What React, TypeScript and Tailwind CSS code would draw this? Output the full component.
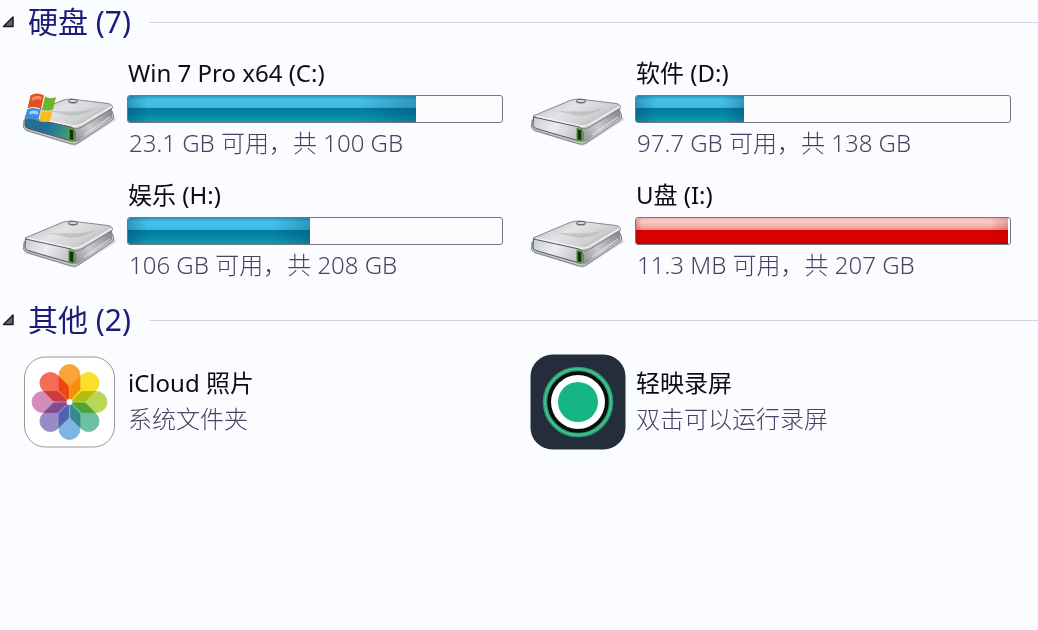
import { useState, type ReactNode } from 'react'

interface Drive {
    name: string
    free: string
    used: number
    system?: boolean
}

const drives: Drive[] = [
    { name: 'Win 7 Pro x64 (C:)', free: '23.1 GB 可用，共 100 GB', used: 77, system: true },
    { name: '软件 (D:)', free: '97.7 GB 可用，共 138 GB', used: 29 },
    { name: '娱乐 (H:)', free: '106 GB 可用，共 208 GB', used: 48.7 },
    { name: 'U盘 (I:)', free: '11.3 MB 可用，共 207 GB', used: 99.5 },
]

const petals = [
    { angle: 0, color: '#fba338' },
    { angle: 45, color: '#f8e02c' },
    { angle: 90, color: '#b9d757' },
    { angle: 135, color: '#6cc2a0' },
    { angle: 180, color: '#80b4e4' },
    { angle: 225, color: '#9a8ac6' },
    { angle: 270, color: '#d58bb8' },
    { angle: 315, color: '#f46c55' },
]

function DriveIcon({ id, system }: { id: string; system?: boolean }) {
    return (
        <svg viewBox="0 0 96 60" className="mt-8 w-24 shrink-0" aria-hidden="true">
            <defs>
                <linearGradient id={`${id}-top`} x1="0" y1="0" x2="1" y2="0.6">
                    <stop offset="0" stopColor="#b9babd" />
                    <stop offset="0.45" stopColor="#e3e3e5" />
                    <stop offset="0.75" stopColor="#cfd0d2" />
                    <stop offset="1" stopColor="#a9abad" />
                </linearGradient>
                <linearGradient id={`${id}-side`} x1="0" y1="1" x2="1" y2="0">
                    <stop offset="0" stopColor="#8b8d90" />
                    <stop offset="0.4" stopColor="#c9cacd" />
                    <stop offset="1" stopColor="#7d7f83" />
                </linearGradient>
                <linearGradient id={`${id}-front`} x1="0" y1="0" x2="1" y2="0.3">
                    <stop offset="0" stopColor={system ? '#2d6c8c' : '#c8cad2'} />
                    <stop offset="0.5" stopColor={system ? '#1f6f9c' : '#ececf4'} />
                    <stop offset="1" stopColor={system ? '#3f9a7c' : '#c3c5cd'} />
                </linearGradient>
            </defs>
            <path d="M3 42 L53 57 L94 31 L92 27 Z" fill="#8d8f93" opacity="0.35" />
            {/* base */}
            <path d="M2 31 L1.500 38 Q2 40.500 5 41.500 L46 54 Q53 56.500 57 53.500 L90 31 Q92 29.500 91.500 26 L90 22 Z" fill="#c5c7ca" stroke="#77797c" strokeWidth="0.9" />
            {/* right side */}
            <path d="M53 53 Q57 53 59 51 L90 29 V17 L60 35 Q53 39 53 44 Z" fill={`url(#${id}-side)`} />
            {/* lid */}
            <path d="M3 27 L40 11.500 Q44 10 49 10 L86 14.500 Q91 15.500 90.500 19 L61 37.500 Q56 41 50 39.500 L7 29.500 Q3 29 3 27 Z" fill={`url(#${id}-top)`} stroke="#6e7073" strokeWidth="0.8" />
            <path d="M6 27.500 L50 37 Q56 38 61 34.500 L90 17.500" fill="none" stroke="#f4f4f5" strokeWidth="2" opacity="0.85" />
            <path d="M27 22 L44 26 Q53 28 64 24 L74 19 Q60 23 50 22.500 Z" fill="#a5a6a9" opacity="0.45" />
            <path d="M62 46 L88 28" stroke="#e8e8ea" strokeWidth="1.200" opacity="0.7" />
            {/* front */}
            <path d="M3.500 28 L49 38 Q53 39 53 43 V50 Q53 53 49 52 L6 39.500 Q3 38.500 3 36 Z" fill={`url(#${id}-front)`} stroke="#55585c" strokeWidth="1" />
            <path d="M47 39.500 L52 40.500 V52 L47 51 Z" fill="#163015" stroke="#5fa436" strokeWidth="1.300" />
            <ellipse cx="51" cy="12.500" rx="5" ry="2.200" fill="#9a9b9e" />
            <ellipse cx="51" cy="12" rx="4.500" ry="1.700" fill="#d5d6d8" stroke="#55565a" strokeWidth="0.9" />
            {system && (
                <g>
                    <path d="M8.500 6.500 Q15 2.500 22 6.500 L19 20 Q12 16.500 5.500 19.500 Z" fill="#e2501f" />
                    <path d="M23 7.500 Q28.500 10.500 34 8 L31 20.500 Q25 23 20 20.500 Z" fill="#6fb52c" />
                    <path d="M5.200 20.500 Q12 17.500 18.500 21 L16 32 Q9 29 2.500 30.500 Z" fill="#3a8fd6" />
                    <path d="M19.500 21.500 Q25 24 30.800 21.500 L28 32 Q22 34 17 32 Z" fill="#f8bd22" />
                    <path d="M10 8.500 Q15 5.500 20 8 L19 11 Q14 9 9.500 12 Z" fill="#f58c61" />
                    <path d="M8 22.500 Q12 20.500 16.500 23 L15.500 26 Q11 24 7 25.500 Z" fill="#a3d4f5" />
                </g>
            )}
        </svg>
    )
}

function PhotosIcon() {
    return (
        <svg viewBox="0 0 96 96" className="w-24 shrink-0" aria-hidden="true">
            <rect x="2.500" y="3" width="90" height="90" rx="21" fill="#fff" stroke="#98989c" strokeWidth="1" />
            <g transform="translate(47.500 48)">
                {petals.map(petal => (
                    <path
                        key={petal.angle}
                        d="M0 -1 L-10.500 -12 V-27 A10.500 10.500 0 0 1 10.500 -27 V-12 Z"
                        transform={`rotate(${petal.angle})`}
                        fill={petal.color}
                        stroke={petal.color}
                        strokeWidth="0.8"
                        className="mix-blend-multiply"
                    />
                ))}
                <circle r="3" fill="#fff" />
            </g>
        </svg>
    )
}

function RecorderIcon() {
    return (
        <svg viewBox="0 0 96 96" className="w-24 shrink-0" aria-hidden="true">
            <rect x="0.500" y="0.500" width="95" height="95" rx="22" fill="#242e3a" />
            <circle cx="48" cy="48" r="33" fill="#07100d" stroke="#2b9f72" strokeWidth="4.500" />
            <circle cx="48" cy="48" r="33" fill="none" stroke="#4cc596" strokeWidth="1.500" />
            <circle cx="48" cy="48" r="27" fill="#fff" />
            <circle cx="48" cy="48" r="20" fill="#14b686" />
        </svg>
    )
}

function CapacityBar({ name, used }: { name: string; used: number }) {
    const full = used > 90
    return (
        <div
            role="meter"
            aria-label={name}
            aria-valuemin={0}
            aria-valuemax={100}
            aria-valuenow={used}
            className="mt-1.5 h-7 overflow-hidden rounded-[3px] border border-[#74767c] bg-[#fcfcff]"
        >
            <div
                className={
                    full
                        ? 'h-full bg-[linear-gradient(to_bottom,#f3b8ba_0%,#fbc9c9_15%,#f7a9a3_35%,#f08a80_46%,#d90000_48%,#dc0204_90%,#b80000_100%)]'
                        : 'h-full bg-[linear-gradient(to_bottom,#2f9cc4_0%,#45c2ea_15%,#3fbbe2_44%,#047a9e_47%,#0489a8_75%,#129cb4_100%)]'
                }
                style={{ width: `${used}%` }}
            >
                <div
                    className={
                        full
                            ? 'h-full bg-[linear-gradient(to_right,#80000040,#80000000_6px,#80000000_95%,#80000030)]'
                            : 'h-full bg-[linear-gradient(to_right,#003a6050,#003a6000_20px,#003a6000_80%,#003a6050)]'
                    }
                />
            </div>
        </div>
    )
}

function Section({ title, children }: { title: string; children: ReactNode }) {
    const [open, setOpen] = useState(true)

    return (
        <section className="mb-[17px]">
            <h2 className="flex h-11 items-center gap-[18px]">
                <button
                    type="button"
                    aria-expanded={open}
                    onClick={() => setOpen(!open)}
                    className="flex items-center gap-3.5 pl-0.5 text-[30px] leading-10 text-[#1c1c78]"
                >
                    <svg viewBox="0 0 12 12" className="w-3" aria-hidden="true">
                        <path d="M11 1 V10.500 H1.500 Z" fill="#6b6468" stroke="#1c1a1e" strokeWidth="1.500" strokeLinejoin="round" />
                    </svg>
                    {title}
                </button>
                <span className="h-px flex-1 bg-[#d3d6dd]" />
            </h2>
            {open && (
                <div className="grid grid-cols-2 gap-x-[27px] gap-y-[19px] pt-3 pr-[27px] pl-[22px]">
                    {children}
                </div>
            )}
        </section>
    )
}

function DriveItem({ drive, id }: { drive: Drive; id: string }) {
    return (
        <div className="flex items-start gap-[9px] pt-px">
            <DriveIcon id={id} system={drive.system} />
            <div className="min-w-0 flex-1 text-2xl">
                <h3 className="pl-px text-[#0c0a14]">{drive.name}</h3>
                <CapacityBar name={drive.name} used={drive.used} />
                <p className="mt-1 pl-0.5 font-light text-[#4c3f62]">{drive.free}</p>
            </div>
        </div>
    )
}

function AppItem({ icon, name, detail }: { icon: ReactNode; name: string; detail: string }) {
    return (
        <div className="flex items-center gap-2.5">
            {icon}
            <div className="min-w-0 flex-1 pb-0.5 text-2xl">
                <h3 className="text-[#0c0a14]">{name}</h3>
                <p className="mt-1 font-light text-[#4c3f62]">{detail}</p>
            </div>
        </div>
    )
}

export default function App() {
    return (
        <main className="min-h-screen bg-[#fafcff] font-['Noto_Sans','Noto_Sans_CJK_SC',sans-serif]">
            <Section title="硬盘 (7)">
                {drives.map((drive, i) => (
                    <DriveItem key={drive.name} drive={drive} id={`drive${i}`} />
                ))}
            </Section>
            <Section title="其他 (2)">
                <AppItem icon={<PhotosIcon />} name="iCloud 照片" detail="系统文件夹" />
                <AppItem icon={<RecorderIcon />} name="轻映录屏" detail="双击可以运行录屏" />
            </Section>
        </main>
    )
}
